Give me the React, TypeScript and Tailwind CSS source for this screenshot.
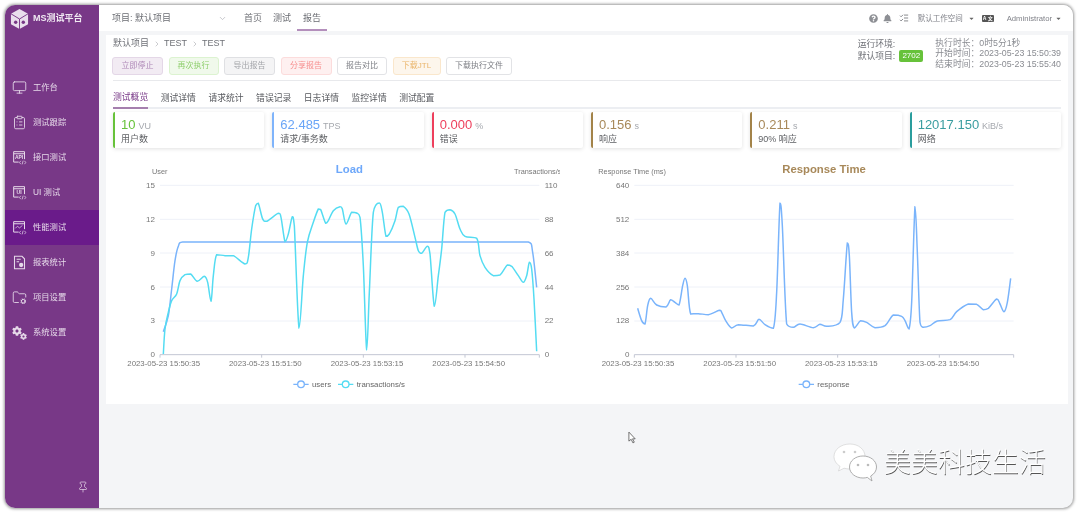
import React from 'react';
import { Monitor, ClipboardList, Pin, ChevronDown, ChevronRight, ListChecks, FolderCog } from 'lucide-react';
import { FaQuestionCircle, FaBell, FaCaretDown, FaCog } from 'react-icons/fa';

type Pt = [number, number];

const clamp = (v: number, a: number, b: number) => Math.min(Math.max(a, b), Math.max(Math.min(a, b), v));

// catmull-rom through the points, control points clamped so the line never overshoots
const smooth = (pts: Pt[]) => {
  let d = `M${pts[0][0]} ${pts[0][1]}`;
  for (let i = 0; i < pts.length - 1; i++) {
    const p0 = pts[Math.max(i - 1, 0)];
    const p1 = pts[i];
    const p2 = pts[i + 1];
    const p3 = pts[Math.min(i + 2, pts.length - 1)];
    const c1x = clamp(p1[0] + (p2[0] - p0[0]) / 6, p1[0], p2[0]);
    const c1y = clamp(p1[1] + (p2[1] - p0[1]) / 6, p1[1], p2[1]);
    const c2x = clamp(p2[0] - (p3[0] - p1[0]) / 6, p1[0], p2[0]);
    const c2y = clamp(p2[1] - (p3[1] - p1[1]) / 6, p1[1], p2[1]);
    d += ` C${c1x} ${c1y} ${c2x} ${c2y} ${p2[0]} ${p2[1]}`;
  }
  return d;
};

const transactions: Pt[] = [[160,585],[165,510],[175,460],[185,425],[200,405],[210,365],[225,347],[242,345],[262,367],[283,352],[293,370],[303,427],[310,350],[320,287],[345,290],[370,290],[405,315],[415,295],[425,210],[437,140],[445,133],[458,180],[470,187],[505,163],[513,175],[525,248],[535,225],[547,173],[553,200],[567,507],[580,350],[592,250],[610,190],[625,150],[632,152],[647,193],[655,185],[670,155],[690,143],[697,150],[708,195],[725,160],[740,162],[750,175],[760,320],[770,572],[778,400],[790,160],[808,132],[817,160],[828,232],[838,225],[855,185],[865,145],[880,142],[897,165],[915,235],[925,275],[935,283],[952,262],[960,285],[973,442],[985,350],[995,270],[1005,160],[1020,152],[1035,165],[1050,210],[1065,232],[1100,238],[1110,290],[1125,325],[1150,350],[1170,348],[1192,318],[1205,322],[1225,350],[1240,370],[1250,350],[1258,310],[1265,330],[1272,420],[1280,577]];
const users: Pt[] = [[160,518],[175,470],[185,390],[195,305],[205,262],[218,249],[1255,249],[1268,280],[1280,385]];
const response: Pt[] = [[173,448],[185,485],[195,495],[203,440],[212,418],[230,438],[258,444],[272,422],[285,430],[297,438],[308,380],[315,358],[322,380],[332,465],[355,464],[385,467],[418,454],[425,460],[437,485],[455,507],[475,497],[520,501],[537,481],[555,497],[580,508],[590,400],[600,133],[607,200],[620,495],[640,505],[660,495],[700,506],[720,496],[740,502],[780,490],[790,420],[802,252],[808,290],[815,460],[823,507],[842,485],[860,490],[885,506],[915,500],[940,468],[965,472],[975,485],[987,510],[995,430],[1005,143],[1012,280],[1020,490],[1030,505],[1050,500],[1072,486],[1110,482],[1130,458],[1165,435],[1190,436],[1210,452],[1225,448],[1250,420],[1260,435],[1272,458],[1282,430],[1292,358]];

const BoxIcon = ({ label, children }: { label?: string; children?: React.ReactNode }) => (
  <svg viewBox="0 0 18 18" className="h-[15px] w-[15px]" fill="none" stroke="currentColor" strokeWidth="1.2">
    <path d="M8 14.5H2V2h13v9" />
    <path d="M2 4.5h13" />
    {label && <text x="8.5" y="11" fontSize="6" fontWeight="700" fill="currentColor" stroke="none" textAnchor="middle">{label}</text>}
    {children}
    <path d="M10.5 13l-1.5 2 1.5 2M15 13l1.5 2-1.5 2M13.4 12.8l-1.2 4.4" strokeWidth="0.9" />
  </svg>
);

const ReportIcon = () => (
  <svg viewBox="0 0 18 18" className="h-[15px] w-[15px]" fill="none" stroke="currentColor" strokeWidth="1.3">
    <path d="M3 1.5h9l3 3v12H3z" />
    <path d="M5.5 5h5M5.5 8h3" />
    <circle cx="11" cy="12" r="2.6" fill="currentColor" stroke="none" />
  </svg>
);

const Gears = () => (
  <span className="relative block h-[15px] w-[15px]">
    <FaCog className="absolute left-0 top-[1px] h-[10px] w-[10px]" />
    <FaCog className="absolute bottom-0 right-0 h-[7px] w-[7px]" />
  </span>
);

const navItems: { name: string; icon: React.ReactNode; active?: boolean }[] = [
  { name: '工作台', icon: <Monitor className="h-[15px] w-[15px]" strokeWidth={1.4} /> },
  { name: '测试跟踪', icon: <ClipboardList className="h-[15px] w-[15px]" strokeWidth={1.4} /> },
  { name: '接口测试', icon: <BoxIcon label="API" /> },
  { name: 'UI 测试', icon: <BoxIcon label="UI" /> },
  { name: '性能测试', icon: <BoxIcon><path d="M4 10l2.5-2.5L9 9.5l3.5-3" strokeWidth="0.9" /></BoxIcon>, active: true },
  { name: '报表统计', icon: <ReportIcon /> },
  { name: '项目设置', icon: <FolderCog className="h-[15px] w-[15px]" strokeWidth={1.4} /> },
  { name: '系统设置', icon: <Gears /> },
];

const actions = [
  { name: '立即停止', cls: 'w-[51px] bg-[#f2ebf3] border-[#e4d7e7] text-[#ae88b7]' },
  { name: '再次执行', cls: 'w-[50px] bg-[#f0f9eb] border-[#dcf3d0] text-[#8fcf6e]' },
  { name: '导出报告', cls: 'w-[51px] bg-[#f4f4f5] border-[#dfe0e3] text-[#a3a5aa]' },
  { name: '分享报告', cls: 'w-[51px] bg-[#fef0f0] border-[#fcdcdc] text-[#f68f8f]' },
  { name: '报告对比', cls: 'w-[50px] bg-white border-[#e2e3e6] text-[#7d7f85]' },
  { name: '下载JTL', cls: 'w-[48px] bg-[#fdf6ec] border-[#fae7cc] text-[#eab56b]' },
  { name: '下载执行文件', cls: 'w-[66px] bg-white border-[#e2e3e6] text-[#7d7f85]' },
];

const tabs = ['测试概览', '测试详情', '请求统计', '错误记录', '日志详情', '监控详情', '测试配置'];

const stats = [
  { value: '10', unit: 'VU', label: '用户数', border: 'border-l-[#67c23a]', color: 'text-[#67c23a]' },
  { value: '62.485', unit: 'TPS', label: '请求/事务数', border: 'border-l-[#7fb4fb]', color: 'text-[#6aa5f7]' },
  { value: '0.000', unit: '%', label: '错误', border: 'border-l-[#ee3f5c]', color: 'text-[#ee3f5c]' },
  { value: '0.156', unit: 's', label: '响应', border: 'border-l-[#a38349]', color: 'text-[#a8895a]' },
  { value: '0.211', unit: 's', label: '90% 响应', border: 'border-l-[#a38349]', color: 'text-[#a8895a]' },
  { value: '12017.150', unit: 'KiB/s', label: '网络', border: 'border-l-[#2a9d9d]', color: 'text-[#3a9da0]' },
];

const runInfo = [
  { label: '执行时长：', value: '0时5分1秒' },
  { label: '开始时间：', value: '2023-05-23 15:50:39' },
  { label: '结束时间：', value: '2023-05-23 15:55:40' },
];

const Legend = ({ x, color, label }: { x: number; color: string; label: string }) => (
  <g>
    <path d={`M${x} 676h46`} stroke={color} strokeWidth="4" />
    <circle cx={x + 23} cy="676" r="10" fill="white" stroke={color} strokeWidth="4" />
    <text x={x + 56} y="683" fontSize="23.5" fill="#666">{label}</text>
  </g>
);

const Axis = ({ x0, x1, labels }: { x0: number; x1: number; labels: string[] }) => {
  const ys = [79, 181, 282, 384, 486];
  const step = 305;
  return (
    <g>
      {ys.map((y) => <path key={y} d={`M${x0} ${y}H${x1}`} stroke="#eef1f8" strokeWidth="3" />)}
      <path d={`M${x0} 587H${x1}`} stroke="#c3c7d3" strokeWidth="3" />
      {[0, 1, 2, 3].map((i) => (
        <g key={i}>
          <path d={`M${x0 + i * step} 587v9`} stroke="#c3c7d3" strokeWidth="3" />
          <text x={x0 + i * step + 11} y="620" fontSize="23.5" fill="#777" textAnchor="middle">{labels[i]}</text>
        </g>
      ))}
      <path d={`M${x1} 587v9`} stroke="#c3c7d3" strokeWidth="3" />
    </g>
  );
};

const times = ['2023-05-23 15:50:35', '2023-05-23 15:51:50', '2023-05-23 15:53:15', '2023-05-23 15:54:50'];

const LoadChart = () => (
  <svg viewBox="0 0 1350 720" className="h-[240px] w-[450px] shrink-0">
    <text x="718" y="41" fontSize="34" fontWeight="700" fill="#6ea8fa" textAnchor="middle">Load</text>
    <text x="126" y="46" fontSize="22" fill="#777">User</text>
    <text x="1212" y="46" fontSize="22" fill="#777">Transactions/s</text>
    <Axis x0={150} x1={1288} labels={times} />
    {['15', '12', '9', '6', '3', '0'].map((t, i) => (
      <text key={t} x="135" y={[87, 189, 290, 392, 493, 595][i]} fontSize="24" fill="#777" textAnchor="end">{t}</text>
    ))}
    {['110', '88', '66', '44', '22', '0'].map((t, i) => (
      <text key={t} x="1304" y={[87, 189, 290, 392, 493, 595][i]} fontSize="24" fill="#777">{t}</text>
    ))}
    <path d={smooth(users)} fill="none" stroke="#7ab4fb" strokeWidth="4.5" />
    <path d={smooth(transactions)} fill="none" stroke="#54dcf2" strokeWidth="4.5" />
    <Legend x={550} color="#7ab4fb" label="users" />
    <Legend x={684} color="#54dcf2" label="transactions/s" />
  </svg>
);

const ResponseChart = () => (
  <svg viewBox="0 0 1350 720" className="h-[240px] w-[450px] shrink-0">
    <text x="732" y="41" fontSize="34" fontWeight="700" fill="#a8895a" textAnchor="middle">Response Time</text>
    <text x="55" y="46" fontSize="22" fill="#777">Response Time (ms)</text>
    <Axis x0={163} x1={1301} labels={times} />
    {['640', '512', '384', '256', '128', '0'].map((t, i) => (
      <text key={t} x="148" y={[87, 189, 290, 392, 493, 595][i]} fontSize="24" fill="#777" textAnchor="end">{t}</text>
    ))}
    <path d={smooth(response)} fill="none" stroke="#7ab4fb" strokeWidth="4.5" />
    <Legend x={656} color="#7ab4fb" label="response" />
  </svg>
);

const WeChat = () => (
  <svg viewBox="0 0 44 40" className="h-[40px] w-[44px]">
    <path d="M17 1C8 1 1 6.500 1 13.500c0 4 2.300 7.400 6 9.800L5.500 28l5.500-2.800c2 .5 3.800.8 6 .8 8.500 0 15-5.500 15-12.500S25.500 1 17 1z" fill="#fff" stroke="#ccc" strokeWidth="0.6" />
    <path d="M30 13c-7.500 0-13.500 4.800-13.500 11S22.500 35 30 35c1.500 0 3-.2 4.300-.6L39 38l-1.300-5c3.600-2 5.800-5.200 5.800-9 0-6.200-6-11-13.500-11z" fill="#fff" stroke="#999" strokeWidth="0.8" />
    <circle cx="11" cy="9" r="1.300" fill="#ccc" />
    <circle cx="22" cy="9" r="1.300" fill="#ccc" />
    <circle cx="25" cy="22" r="1.300" fill="#bbb" />
    <circle cx="35" cy="22" r="1.300" fill="#bbb" />
  </svg>
);

const App = () => {
  return (
    <div className="relative h-[513px] w-[1080px] overflow-hidden bg-white pb-[5px] pl-[5px] pr-[7px] pt-[5px] font-['Liberation_Sans','Noto_Sans_CJK_SC',sans-serif] blur-[0.4px]">
      <div className="flex h-full overflow-hidden rounded-[10px] bg-[#f4f5f7] shadow-[0_0_3px_1px_rgba(0,0,0,0.4)]">
        {/* Sidebar */}
        <aside className="flex w-[94px] shrink-0 flex-col bg-[#783887] text-[#e6d9e9]">
          <div className="flex h-[26px] items-center gap-[4px] pl-[5px] pt-[1px]">
            <svg viewBox="0 0 20 22" className="h-[22px] w-[19px]">
              <path d="M10 0.500L19 5.500V16.500L10 21.500L1 16.500V5.500z" fill="#e9dfec" />
              <path d="M10 11L1 5.500M10 11l9-5.500M10 11v10.500" stroke="#783887" strokeWidth="1" fill="none" />
              <circle cx="6" cy="14.500" r="1.800" fill="#783887" />
              <circle cx="14" cy="14.500" r="1.800" fill="#783887" />
            </svg>
            <span className="text-[9px] font-bold whitespace-nowrap text-[#f0e9f2]">MS测试平台</span>
          </div>
          <nav className="mt-[39px] flex flex-col">
            {navItems.map((item) => (
              <div key={item.name} className={`flex h-[35px] items-center gap-[6px] pl-[7px] ${item.active ? 'bg-[#6a1b8a]' : ''}`}>
                {item.icon}
                <span className="text-[8.300px] whitespace-nowrap">{item.name}</span>
              </div>
            ))}
          </nav>
          <div className="mt-auto flex justify-end pb-[15px] pr-[10px]">
            <Pin className="h-[12px] w-[12px]" strokeWidth={1.4} />
          </div>
        </aside>

        <div className="flex min-w-0 flex-1 flex-col">
          {/* Top bar */}
          <header className="flex h-[26px] shrink-0 items-center bg-white pt-[1px] text-[9px] text-[#6b6d73]">
            <div className="flex w-[128px] items-center pl-[13px]">
              <span className="whitespace-nowrap">项目: 默认项目</span>
              <ChevronDown className="ml-auto h-[9px] w-[9px] text-[#b5b7bc]" />
            </div>
            <nav className="ml-[15px] flex h-full items-center">
              <span className="px-[2px]">首页</span>
              <span className="ml-[7px] px-[2px]">测试</span>
              <span className="ml-[4px] flex h-full items-center border-b-2 border-[#b48fbc] px-[6px] pt-[2px]">报告</span>
            </nav>
            <div className="ml-auto flex items-center pr-[11.500px] text-[7.500px] text-[#808289]">
              <FaQuestionCircle className="h-[9px] w-[9px] text-[#8d8f94]" />
              <FaBell className="ml-[5px] h-[9px] w-[9px] text-[#8d8f94]" />
              <ListChecks className="ml-[6.500px] h-[10px] w-[10px] text-[#707277]" />
              <span className="ml-[9px] whitespace-nowrap">默认工作空间</span>
              <FaCaretDown className="ml-[5.500px] h-[7px] w-[7px] text-[#666]" />
              <span className="ml-[6.500px] flex h-[7px] w-[12px] items-center justify-between rounded-[1px] bg-[#555] px-[1px] text-[5px] font-bold leading-none text-white">
                <span>A</span>
                <span>文</span>
              </span>
              <span className="ml-[13px] whitespace-nowrap text-[7.700px]">Administrator</span>
              <FaCaretDown className="ml-[2.500px] h-[7px] w-[7px] text-[#666]" />
            </div>
          </header>

          {/* Report card */}
          <main className="pl-[7px] pr-[5px] pt-[4px]">
            <section className="h-[369px] bg-white px-[7px] pt-[3px]">
              <div className="flex h-[43px] items-start border-b border-[#e8e9ec]">
                <div className="flex flex-col">
                  <div className="flex h-[11px] items-center text-[9px] text-[#6f7177]">
                    <span>默认项目</span>
                    <ChevronRight className="mx-[3.500px] h-[8px] w-[8px] text-[#b0b2b7]" />
                    <span>TEST</span>
                    <ChevronRight className="mx-[3.500px] h-[8px] w-[8px] text-[#b0b2b7]" />
                    <span>TEST</span>
                  </div>
                  <div className="-ml-[1px] mt-[8px] flex gap-[5.500px]">
                    {actions.map((a) => (
                      <span key={a.name} className={`flex h-[18px] items-center justify-center whitespace-nowrap rounded-[3px] border text-[8px] ${a.cls}`}>{a.name}</span>
                    ))}
                  </div>
                </div>
                <div className="ml-auto flex items-start text-[8.800px]">
                  <div className="flex flex-col text-[#6f7177]">
                    <span className="h-[12px] leading-[12px]">运行环境:</span>
                    <span className="flex h-[12px] items-center whitespace-nowrap leading-[12px]">
                      默认项目:
                      <span className="ml-[4px] flex h-[12px] w-[24px] items-center justify-center rounded-[2px] bg-[#67c23a] text-[8px] text-white">2702</span>
                    </span>
                  </div>
                  <div className="ml-[12px] flex flex-col text-[#8a8c92]">
                    {runInfo.map((r) => (
                      <div key={r.label} className="flex h-[10.700px] items-center whitespace-nowrap">
                        <span className="w-[44px]">{r.label}</span>
                        <span>{r.value}</span>
                      </div>
                    ))}
                  </div>
                </div>
              </div>

              <div className="flex h-[28px] items-stretch gap-[12.500px] border-b-2 border-[#eceef2] text-[8.800px] text-[#55575c]">
                {tabs.map((t, i) => (
                  <span key={t} className={`-mb-[2px] flex items-center whitespace-nowrap pt-[7px] ${i === 0 ? 'border-b-2 border-[#a57fae] text-[#783887]' : ''}`}>{t}</span>
                ))}
              </div>

              <div className="mt-[3px] grid grid-cols-6 gap-[8px]">
                {stats.map((s) => (
                  <div key={s.label} className={`h-[36px] rounded-[2px] border-l-2 bg-white pl-[6px] pt-[3px] shadow-[0_1px_4px_rgba(0,0,0,0.12)] ${s.border}`}>
                    <div className="flex h-[18px] items-baseline gap-[3px] whitespace-nowrap">
                      <span className={`text-[13px] ${s.color}`}>{s.value}</span>
                      <span className="text-[9px] text-[#a5a8ae]">{s.unit}</span>
                    </div>
                    <div className="text-[9px] leading-[12px] text-[#606266]">{s.label}</div>
                  </div>
                ))}
              </div>

              <div className="-ml-[3px] mt-[11px] flex gap-[20px]">
                <LoadChart />
                <ResponseChart />
              </div>
            </section>
          </main>
        </div>
      </div>

      {/* Mouse pointer and watermark sit over the screenshot */}
      <svg viewBox="0 0 10 14" className="absolute left-[628px] top-[431px] h-[13px] w-[9px]">
        <path d="M1 1v10l2.500-2 2 4 1.500-.8-2-3.700H8z" fill="#fff" stroke="#555" strokeWidth="0.9" />
      </svg>
      <div className="absolute left-[833px] top-[443px] flex items-center gap-[7px]">
        <WeChat />
        <span className="whitespace-nowrap text-[27px] font-light leading-none text-white [text-shadow:0.5px_0.5px_0.5px_#555]">美美科技生活</span>
      </div>
    </div>
  );
};

export default App;
